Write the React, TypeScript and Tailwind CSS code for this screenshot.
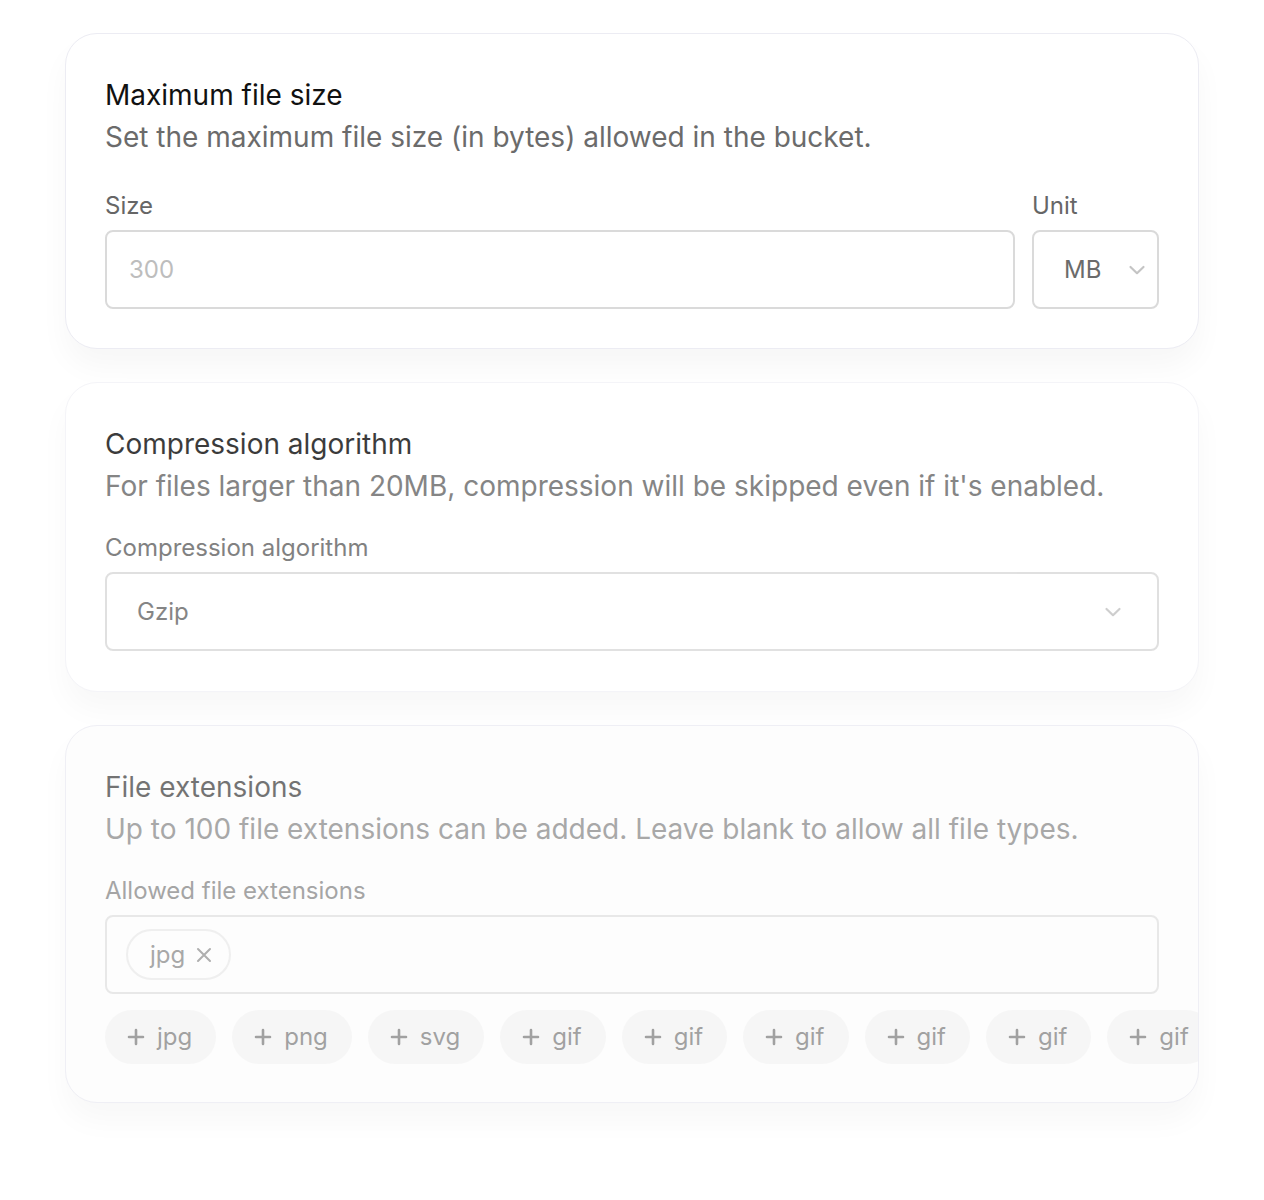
import React from "react";

const Chevron = ({ className }: { className?: string }) => (
  <svg className={className} width="18" height="18" viewBox="0 0 18 18" fill="none">
    <path d="M2.5 6l6.5 6.2L15.5 6" stroke="currentColor" strokeWidth="2.2" strokeLinecap="round" strokeLinejoin="round" />
  </svg>
);

const Plus = () => (
  <svg width="18" height="18" viewBox="0 0 18 18" fill="none">
    <path d="M9 2v14M2 9h14" stroke="currentColor" strokeWidth="2.6" strokeLinecap="round" />
  </svg>
);

const XIcon = () => (
  <svg width="18" height="18" viewBox="0 0 18 18" fill="none">
    <path d="M3 3l12 12M15 3L3 15" stroke="currentColor" strokeWidth="2" strokeLinecap="round" />
  </svg>
);

export default function App() {
  const exts = ["jpg", "png", "svg", "gif", "gif", "gif", "gif", "gif", "gif"];
  return (
    <div
      className="min-h-[1200px] bg-white px-[65px] pt-[33px] flex flex-col gap-[33px]"
      style={{ fontFamily: "Inter, 'Noto Sans', sans-serif" }}
    >
      {/* Card 1 */}
      <div className="rounded-[32px] border border-[#ececf3] bg-white px-[39px] pt-[41px] pb-[39px] shadow-[0_18px_30px_rgba(0,0,0,0.035)]">
        <h2 className="text-[28px] leading-[40px] text-[#111111]">Maximum file size</h2>
        <p className="mt-[2px] text-[28px] leading-[40px] text-[#6b6b6b]">
          Set the maximum file size (in bytes) allowed in the bucket.
        </p>
        <div className="mt-[33px] flex gap-[17px]">
          <div className="flex-1 flex flex-col gap-[8px]">
            <label className="text-[24px] leading-[32px] text-[#666666]">Size</label>
            <div className="h-[79px] rounded-[8px] border-2 border-[#dadada] flex items-center px-[22px] text-[24px] text-[#bdbdbd]">
              300
            </div>
          </div>
          <div className="w-[127px] flex flex-col gap-[8px]">
            <label className="text-[24px] leading-[32px] text-[#666666]">Unit</label>
            <div className="h-[79px] rounded-[8px] border-2 border-[#dadada] flex items-center justify-between pl-[30px] pr-[11px] text-[24px] text-[#6b6b6b]">
              <span>MB</span>
              <Chevron className="text-[#c4c4c4]" />
            </div>
          </div>
        </div>
      </div>

      {/* Card 2 */}
      <div className="rounded-[32px] border border-[#f4f4f8] bg-white px-[39px] pt-[41px] pb-[40px] shadow-[0_18px_30px_rgba(0,0,0,0.03)]">
        <div className="opacity-[0.82]">
          <h2 className="text-[28px] leading-[40px] text-[#111111]">Compression algorithm</h2>
          <p className="mt-[2px] text-[28px] leading-[40px] text-[#6b6b6b]">
            For files larger than 20MB, compression will be skipped even if it's enabled.
          </p>
          <div className="mt-[26px] flex flex-col gap-[8px]">
            <label className="text-[24px] leading-[32px] text-[#666666]">Compression algorithm</label>
            <div className="h-[79px] rounded-[8px] border-2 border-[#dadada] flex items-center justify-between pl-[30px] pr-[35px] text-[24px] text-[#6b6b6b]">
              <span>Gzip</span>
              <Chevron className="text-[#c4c4c4]" />
            </div>
          </div>
        </div>
      </div>

      {/* Card 3 */}
      <div className="rounded-[32px] border border-[#efeff5] bg-[#fdfdfd] pt-[41px] pb-[38px] overflow-hidden shadow-[0_18px_30px_rgba(0,0,0,0.03)]">
        <div className="opacity-[0.58]">
          <div className="px-[39px]">
            <h2 className="text-[28px] leading-[40px] text-[#111111]">File extensions</h2>
            <p className="mt-[2px] text-[28px] leading-[40px] text-[#6b6b6b]">
              Up to 100 file extensions can be added. Leave blank to allow all file types.
            </p>
            <div className="mt-[26px] flex flex-col gap-[8px]">
              <label className="text-[24px] leading-[32px] text-[#666666]">Allowed file extensions</label>
              <div className="h-[79px] rounded-[8px] border-2 border-[#dadada] flex items-center px-[19px]">
                <span className="h-[51px] rounded-full border-2 border-[#e6e6e6] flex items-center gap-[10px] pl-[22px] pr-[16px] text-[24px] text-[#6b6b6b]">
                  jpg
                  <span className="text-[#777]">
                    <XIcon />
                  </span>
                </span>
              </div>
            </div>
          </div>
          <div className="mt-[16px] pl-[39px] flex gap-[16px] whitespace-nowrap">
            {exts.map((e, i) => (
              <span
                key={i}
                className="shrink-0 h-[54px] rounded-full bg-[#f2f2f2] flex items-center gap-[12px] pl-[22px] pr-[24px] text-[24px] text-[#5f5f5f]"
              >
                <Plus />
                {e}
              </span>
            ))}
          </div>
        </div>
      </div>
    </div>
  );
}
